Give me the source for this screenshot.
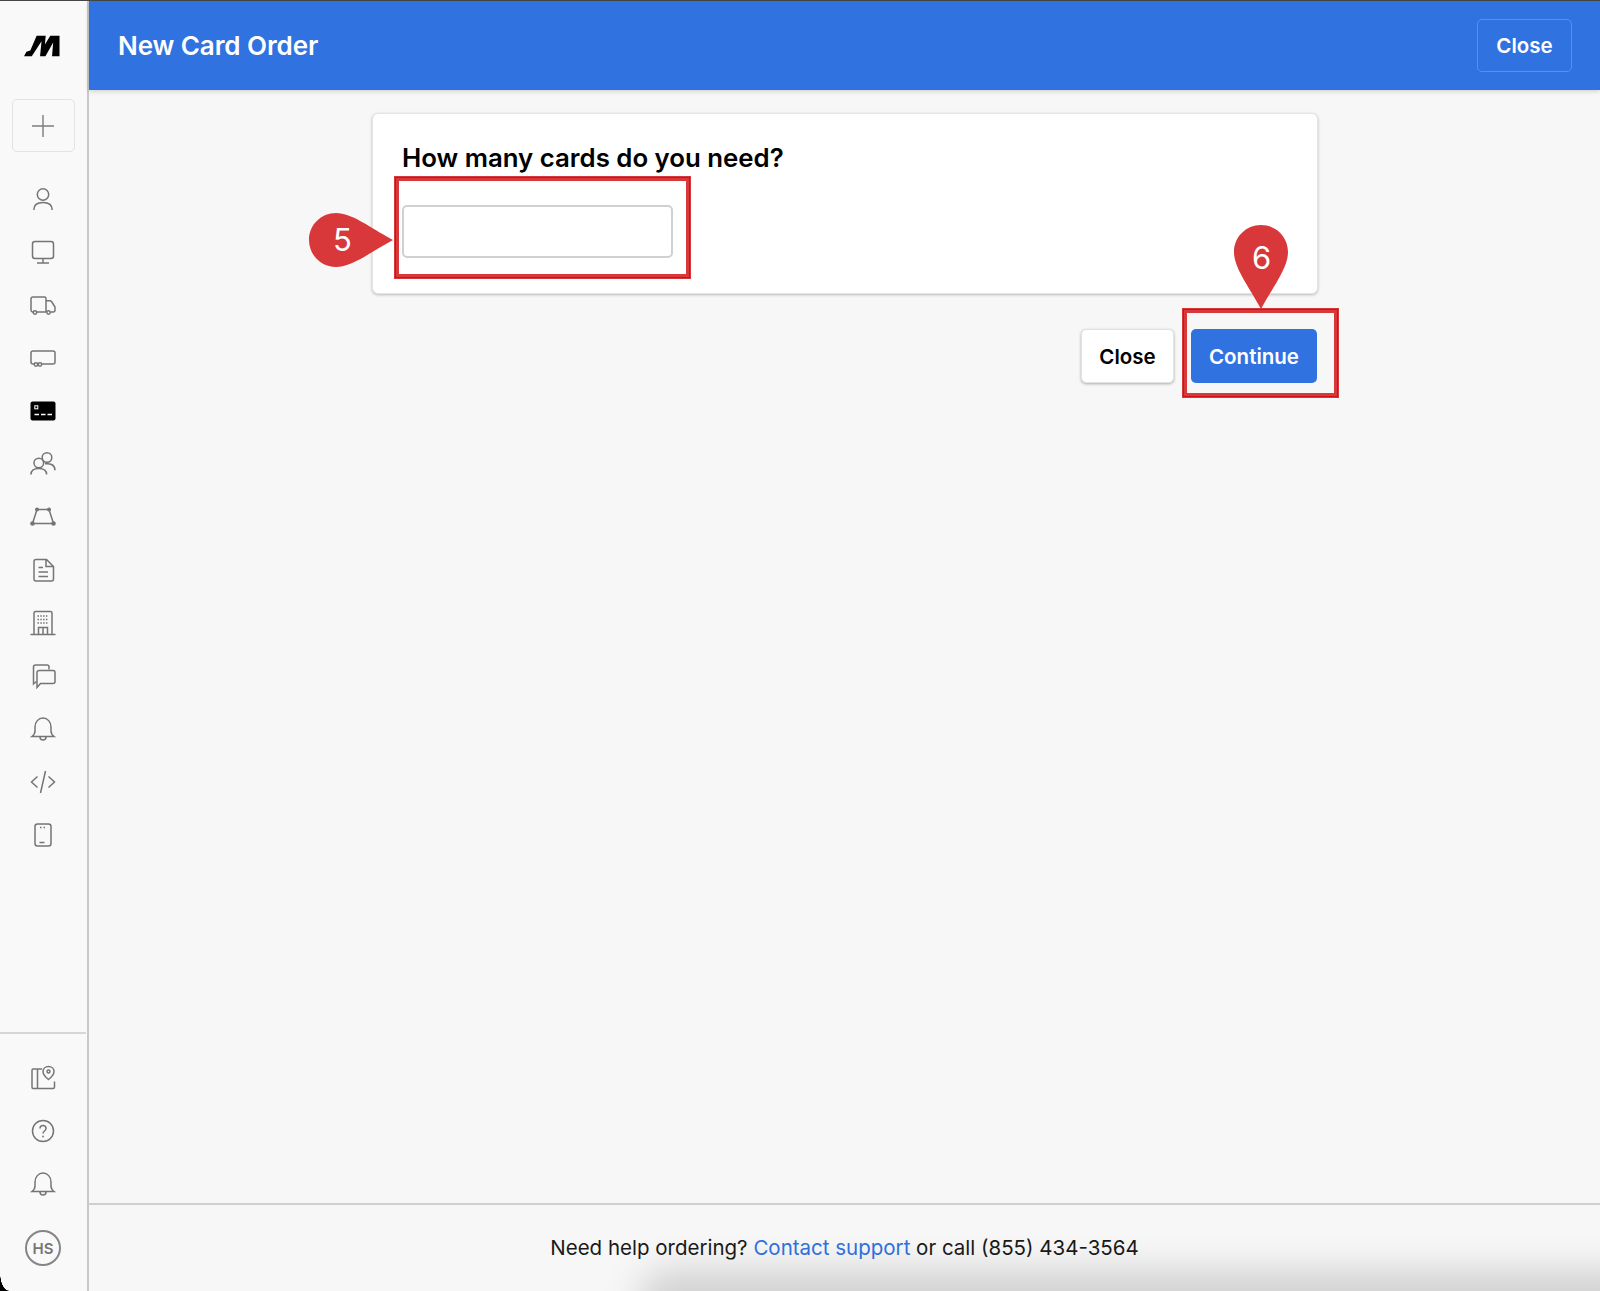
<script>
</script>

<div class="page">
  <aside class="side">
    <div class="logo">
      <svg width="36" height="22" viewBox="0 0 37 22"><path d="M0 21.500 L8 21.500 L18 6 L16.500 21.500 L22 21.500 L30 7.500 L28.800 21.500 L36.500 21.500 L36.500 0.500 L27 0.500 L21.500 9.500 L22.300 0.500 L13 0.500 L6.500 15.500 L2.500 17 Z" fill="#000"/></svg>
    </div>
    <button class="add" aria-label="Add">
      <svg width="24" height="24" viewBox="0 0 24 24"><path d="M12 1v22M1 12h22" fill="none" stroke="#7d7d7d" stroke-width="1.4"/></svg>
    </button>
    <nav class="nav">
      <span class="ic"><svg width="26" height="26" viewBox="0 0 26 26" fill="none" stroke="#757575" stroke-width="1.5"><circle cx="13" cy="8.500" r="5.700"/><path d="M3.800 24c0-5 3.500-7.500 9.200-7.500s9.200 2.500 9.200 7.500"/></svg></span>
      <span class="ic"><svg width="26" height="26" viewBox="0 0 26 26" fill="none" stroke="#757575" stroke-width="1.5"><rect x="2.500" y="2.500" width="21" height="17" rx="2.500"/><path d="M13 19.500v4M7 24h12"/></svg></span>
      <span class="ic"><svg width="26" height="26" viewBox="0 0 26 26" fill="none" stroke="#757575" stroke-width="1.5"><path d="M3.500 20H2.500q-1.500-.3-1.500-2V7q0-2 2-2h11.500q1.500 0 1.500 2v13M7 20h9.500M20.500 20h2.700q1.800 0 1.800-2v-3l-3.500-5.500q-.6-.8-1.700-.8H16"/><circle cx="5" cy="20.500" r="1.700"/><circle cx="18.500" cy="20.500" r="1.700"/></svg></span>
      <span class="ic"><svg width="26" height="26" viewBox="0 0 26 26" fill="none" stroke="#757575" stroke-width="1.5"><path d="M4.500 19H3q-2 0-2-2V8q0-2 2-2h20q2 0 2 2v9q0 2-2 2H11.500M7.800 19h.7"/><circle cx="6" cy="19.500" r="1.700"/><circle cx="10" cy="19.500" r="1.700"/></svg></span>
      <span class="ic"><svg width="26" height="20" viewBox="0 0 26 20"><rect x="0.500" y="0.500" width="25" height="19" rx="2" fill="#000"/><rect x="4.800" y="4.800" width="3" height="3" fill="none" stroke="#fff" stroke-width="1"/><path d="M4.500 13.500h4.500M11 13.500h4.500M17.500 13.500h4.500" stroke="#fff" stroke-width="1.400"/></svg></span>
      <span class="ic"><svg width="26" height="26" viewBox="0 0 26 26" fill="none" stroke="#757575" stroke-width="1.5"><circle cx="8.800" cy="12" r="4.800"/><path d="M1 23.500c0-4 3-6 7.800-6s7.800 2 7.800 6"/><circle cx="17" cy="6.500" r="4.800"/><path d="M15 12.800c5.500-.7 10 1 10 6.500"/></svg></span>
      <span class="ic"><svg width="26" height="26" viewBox="0 0 26 26" fill="none" stroke="#757575" stroke-width="1.5"><path d="M7 5.500h12l4.500 14h-21z"/><g fill="#757575" stroke="none"><circle cx="7" cy="5.500" r="2"/><circle cx="19" cy="5.500" r="2"/><circle cx="2.500" cy="19.500" r="2.300"/><circle cx="23.500" cy="19.500" r="2.300"/></g></svg></span>
      <span class="ic"><svg width="26" height="26" viewBox="0 0 26 26" fill="none" stroke="#757575" stroke-width="1.5"><path d="M6 2.500h10.500l7 7V22q0 2-2 2H6q-2 0-2-2V4.500q0-2 2-2zM16 3v6.500h7"/><path d="M8.500 10.500h4.500M8.500 15h9.500M8.500 19.500h9.500"/></svg></span>
      <span class="ic"><svg width="26" height="26" viewBox="0 0 26 26" fill="none" stroke="#757575" stroke-width="1.5"><path d="M4 24.500V3q0-1.500 1.500-1.500h15Q22 1.500 22 3v21.500M0.500 24.500h25M8.500 24.500v-7h9v7M13 17.500v7"/><path d="M7.500 6h11M7.500 9.500h11M7.500 13h11" stroke-dasharray="1.500 1.300" stroke-width="1.500"/></svg></span>
      <span class="ic"><svg width="26" height="26" viewBox="0 0 26 26" fill="none" stroke="#757575" stroke-width="1.5"><path d="M6.500 18.500l-3 2.500V4q0-2 2-2h11.500q2 0 2 2v2.500"/><path d="M9.500 7.500H23q2 0 2 2v9q0 2-2 2H10.500L7 24.500V9.500q0-2 2.500-2z" fill="#f9f9f9"/></svg></span>
      <span class="ic"><svg width="26" height="26" viewBox="0 0 26 26" fill="none" stroke="#757575" stroke-width="1.5"><path d="M2 20.500c2-1.500 3-3 3-5.500V11c0-5 3.500-9 8-9s8 4 8 9v4c0 2.500 1 4 3 5.500zM10 21c0 4 6 4 6 0"/></svg></span>
      <span class="ic"><svg width="26" height="26" viewBox="0 0 26 26" fill="none" stroke="#757575" stroke-width="1.5"><path d="M7.500 7.500L1.500 13l6 5.500M18.500 7.500l6 5.500-6 5.500M15.500 2l-5 22"/></svg></span>
      <span class="ic"><svg width="26" height="26" viewBox="0 0 26 26" fill="none" stroke="#757575" stroke-width="1.5"><rect x="5" y="2" width="16" height="22" rx="2.500"/><path d="M9.500 20.500h5M10 5.500h1.500M13.500 5.500h1.500"/></svg></span>
    </nav>
    <div class="side-bottom">
      <span class="ic"><svg width="26" height="26" viewBox="0 0 26 26" fill="none" stroke="#757575" stroke-width="1.5"><path d="M12 4H3Q2 4 2 5.500V22q0 1.500 1 1.500h20q1.500 0 1.500-1.500v-5.500M7.500 4v19.500"/><path d="M18.500 1.500c3.300 0 5.500 2.300 5.500 5 0 3-3 6-5.500 8-2.500-2-5.500-5-5.500-8 0-2.700 2.200-5 5.500-5z"/><circle cx="18.500" cy="6.500" r="1.500"/></svg></span>
      <span class="ic"><svg width="26" height="26" viewBox="0 0 26 26" fill="none" stroke="#757575" stroke-width="1.5"><circle cx="13" cy="13" r="10.500"/><path d="M10 10.500c0-4 6-4 6 0 0 2.500-3 2.500-3 5"/><circle cx="13" cy="18.500" r=".9" fill="#757575" stroke="none"/></svg></span>
      <span class="ic"><svg width="26" height="26" viewBox="0 0 26 26" fill="none" stroke="#757575" stroke-width="1.5"><path d="M2 20.500c2-1.500 3-3 3-5.500V11c0-5 3.500-9 8-9s8 4 8 9v4c0 2.500 1 4 3 5.500zM10 21c0 4 6 4 6 0"/></svg></span>
      <span class="avatar">HS</span>
    </div>
  </aside>

  <main class="main">
    <header class="head">
      <h1>New Card Order</h1>
      <button class="head-close">Close</button>
    </header>
    <section class="body">
      <div class="column">
        <div class="card">
          <h2>How many cards do you need?</h2>
          <input class="field" type="text" aria-label="Number of cards" />
        </div>
        <div class="actions">
          <button class="btn light">Close</button>
          <button class="btn primary">Continue</button>
        </div>
      </div>
    </section>
    <footer class="foot">Need help ordering? <a href="#support">Contact support</a> or call (855) 434-3564</footer>
  </main>

  <div class="mark mark-a"></div>
  <div class="mark mark-b"></div>
  <svg class="pin pin-a" width="84" height="54" viewBox="0 0 84 54"><path d="M27 0C43 0 60 14 84 27 60 40 43 54 27 54 12 54 0 42 0 27S12 0 27 0Z" fill="#d9383b"/></svg>
  <span class="num num-a">5</span>
  <svg class="pin pin-b" width="54" height="84" viewBox="0 0 54 84"><path d="M0 27C0 12 12 0 27 0S54 12 54 27C54 43 40 60 27 84 14 60 0 43 0 27Z" fill="#d9383b"/></svg>
  <span class="num num-b">6</span>
  <div class="corner"></div>
  <div class="smear"></div>
</div>

<style>
  :global(body) { margin: 0; background: #f7f7f7; font-family: Inter, "Liberation Sans", sans-serif; }
  .page { position: relative; display: flex; height: 1291px; width: 1600px; overflow: hidden; background: #f7f7f7; border-top: 1px solid #444; box-sizing: border-box; }
  .side { width: 89px; flex: none; box-sizing: border-box; border-right: 2px solid #c9c9c9; padding-right: 1px; display: flex; flex-direction: column; align-items: center; background: #f9f9f9; }
  .logo { height: 90px; display: flex; align-items: center; justify-content: center; flex: none; margin-right: 2px; }
  .add { width: 63px; height: 53px; margin-top: 8px; border: 1px solid #e3e3e3; border-radius: 5px; background: #f9f9f9; display: flex; align-items: center; justify-content: center; padding: 0; }
  .nav { display: flex; flex-direction: column; margin-top: 20px; }
  .ic { display: flex; width: 28px; height: 53px; align-items: center; justify-content: center; flex: none; }
  .side-bottom { margin-top: auto; width: 100%; border-top: 2px solid #d6d6d6; display: flex; flex-direction: column; align-items: center; box-sizing: border-box; padding: 17px 0 25px; }
  .avatar { width: 32px; height: 32px; margin-top: 20px; border: 2px solid #858585; border-radius: 50%; display: flex; align-items: center; justify-content: center; color: #757575; font-weight: 600; font-size: 15px; }
  .main { flex: 1; display: flex; flex-direction: column; min-width: 0; }
  .head { height: 89px; flex: none; background: #3072e0; display: flex; align-items: center; justify-content: space-between; padding: 0 28px 0 29px; box-shadow: 0 1px 5px rgba(0,0,0,.18); box-sizing: border-box; }
  h1 { margin: 0; color: #fff; font-size: 26px; font-weight: 600; letter-spacing: -0.08px; }
  .head-close { width: 95px; height: 53px; background: transparent; border: 1px solid #5c90e8; border-radius: 5px; color: #fff; font: 600 20.500px Inter, sans-serif; padding: 0; }
  .body { flex: 1; display: flex; justify-content: center; padding-top: 23px; padding-left: 1px; }
  .column { width: 946px; }
  .card { height: 181px; background: #fff; border: 1px solid #e4e4e4; border-radius: 6px; box-shadow: 0 1px 3px rgba(0,0,0,.25); box-sizing: border-box; padding: 27px 29px 0; }
  h2 { margin: 0; font-size: 25.800px; line-height: 33px; font-weight: 600; color: #000; }
  .field { display: block; width: 271px; height: 53px; margin-top: 31px; border: 2px solid #d0d0d0; border-radius: 5px; background: #fff; box-sizing: border-box; }
  .actions { display: flex; justify-content: flex-end; gap: 17px; margin-top: 35px; padding-right: 1px; }
  .btn { height: 54px; border-radius: 5px; font: 600 20.500px Inter, sans-serif; padding: 0; }
  .light { width: 93px; background: #fff; color: #000; border: 1px solid #e2e2e2; box-shadow: 0 1px 3px rgba(0,0,0,.3); }
  .primary { width: 126px; background: #2f72e0; color: #fff; border: 0; }
  .foot { height: 88px; flex: none; border-top: 2px solid #cfcfcf; box-sizing: border-box; line-height: 86px; text-align: center; font-size: 20.500px; color: #1a1a1a; }
  .foot a { color: #3072e0; text-decoration: none; }
  .mark { position: absolute; box-sizing: border-box; border: 5px solid #d9383b; outline: 1px solid #d40f14; outline-offset: -2px; }
  .mark-a { left: 394px; top: 175px; width: 297px; height: 103px; }
  .mark-b { left: 1182px; top: 307px; width: 157px; height: 90px; }
  .pin { position: absolute; }
  .pin-a { left: 309px; top: 212px; }
  .pin-b { left: 1234px; top: 224px; }
  .num { position: absolute; color: #fff; font-size: 31px; line-height: 36px; font-family: Inter, sans-serif; }
  .num-a { left: 333px; top: 221px; }
  .num-b { left: 1252px; top: 239px; }
  .corner { position: absolute; left: 0; bottom: 0; width: 9px; height: 18px; background: radial-gradient(ellipse 9px 18px at 100% 0, transparent 96%, #000 100%); }
  .smear { position: absolute; left: 640px; right: -40px; bottom: -30px; height: 50px; background: rgba(0,0,0,.16); filter: blur(18px); pointer-events: none; border-radius: 30px 0 0 0; }
</style>
